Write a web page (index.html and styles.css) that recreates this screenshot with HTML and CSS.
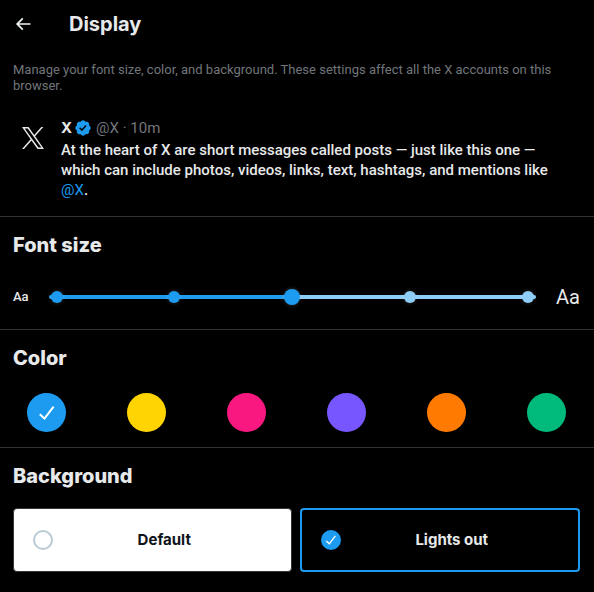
FILE: index.html
```html
<!DOCTYPE html>
<html lang="en">
<head>
<meta charset="utf-8">
<meta name="viewport" content="width=device-width, initial-scale=1">
<title>Display</title>
<link rel="stylesheet" href="styles.css">
</head>
<body>
<main class="settings">
  <header class="topbar">
    <button class="back" type="button" aria-label="Back">
      <svg class="back-icon" viewBox="0 0 24 24" aria-hidden="true"><path d="M7.414 13l5.043 5.04-1.414 1.42L3.586 12l7.457-7.46 1.414 1.42L7.414 11H21v2H7.414z"/></svg>
    </button>
    <h1 class="title">Display</h1>
  </header>

  <p class="intro">Manage your font size, color, and background. These settings affect all the X accounts on this browser.</p>

  <article class="post">
    <svg class="avatar" viewBox="0 0 24 24" aria-hidden="true"><path d="M14.1 10.3 22.3 1h-2l-7.1 8.1L7.6 1H1l8.6 12.2L1 23h2l7.5-8.6 6 8.6H23l-8.9-12.7zm-2.7 3-.9-1.2L3.7 2.5h3l5.6 7.8.9 1.2 7.2 10.1h-3l-6-8.3z"/></svg>
    <div class="post-body">
      <div class="byline">
        <span class="name">X</span>
        <svg class="badge" viewBox="0 0 22 22" role="img" aria-label="Verified account"><path d="M20.396 11c-.018-.646-.215-1.275-.57-1.816-.354-.54-.852-.972-1.438-1.246.223-.607.27-1.264.14-1.897-.131-.634-.437-1.218-.882-1.687-.47-.445-1.053-.75-1.687-.882-.633-.13-1.29-.083-1.897.14-.273-.587-.704-1.086-1.245-1.44S11.647 1.62 11 1.604c-.646.017-1.273.213-1.813.568s-.969.854-1.24 1.44c-.608-.223-1.267-.272-1.902-.14-.635.13-1.22.436-1.69.882-.445.47-.749 1.055-.878 1.688-.13.633-.08 1.29.144 1.896-.587.274-1.087.705-1.443 1.245-.356.54-.555 1.17-.574 1.817.02.647.218 1.276.574 1.817.356.54.856.972 1.443 1.245-.224.606-.274 1.263-.144 1.896.13.634.433 1.218.877 1.688.47.443 1.054.747 1.687.878.633.132 1.29.084 1.897-.136.274.586.705 1.084 1.246 1.439.54.354 1.17.551 1.816.569.647-.016 1.276-.213 1.817-.567s.972-.854 1.245-1.44c.604.239 1.266.296 1.903.164.636-.132 1.22-.447 1.68-.907.46-.46.776-1.044.908-1.681s.075-1.299-.165-1.903c.586-.274 1.084-.705 1.439-1.246.354-.54.551-1.17.569-1.816zM9.662 14.85l-3.429-3.428 1.293-1.302 2.072 2.072 4.4-4.794 1.347 1.246z"/></svg>
        <span class="meta">@X · 10m</span>
      </div>
      <p class="post-text">At the heart of X are short messages called posts — just like this one — which can include photos, videos, links, text, hashtags, and mentions like <a class="mention" href="#">@X</a>.</p>
    </div>
  </article>

  <section class="section font-section">
    <h2 class="heading"><label for="font-size">Font size</label></h2>
    <div class="slider-row">
      <span class="small-sample">Aa</span>
      <div class="slider">
        <div class="ticks" aria-hidden="true">
          <span class="tick"></span><span class="tick"></span><span class="tick"></span><span class="tick tick-off"></span><span class="tick tick-off"></span>
        </div>
        <input class="range" id="font-size" type="range" min="0" max="4" value="2">
      </div>
      <span class="large-sample">Aa</span>
    </div>
  </section>

  <section class="section color-section">
    <h2 class="heading">Color</h2>
    <div class="swatches">
      <label class="choice"><input class="swatch blue" type="radio" name="color" aria-label="Blue" checked><svg class="swatch-check" viewBox="0 0 24 24" aria-hidden="true"><path d="M9.64 18.952l-5.55-4.861 1.317-1.504 3.951 3.459 8.459-10.948L19.4 6.32 9.64 18.952z"/></svg></label>
      <label class="choice"><input class="swatch yellow" type="radio" name="color" aria-label="Yellow"></label>
      <label class="choice"><input class="swatch pink" type="radio" name="color" aria-label="Pink"></label>
      <label class="choice"><input class="swatch purple" type="radio" name="color" aria-label="Purple"></label>
      <label class="choice"><input class="swatch orange" type="radio" name="color" aria-label="Orange"></label>
      <label class="choice"><input class="swatch green" type="radio" name="color" aria-label="Green"></label>
    </div>
  </section>

  <section class="section">
    <h2 class="heading">Background</h2>
    <div class="cards">
      <label class="card card-light">
        <span class="choice"><input class="dot" type="radio" name="background"></span>
        <span class="card-text">Default</span>
      </label>
      <label class="card card-dark">
        <span class="choice"><input class="dot" type="radio" name="background" checked><svg class="dot-check" viewBox="0 0 24 24" aria-hidden="true"><path d="M9.64 18.952l-5.55-4.861 1.317-1.504 3.951 3.459 8.459-10.948L19.4 6.32 9.64 18.952z"/></svg></span>
        <span class="card-text">Lights out</span>
      </label>
    </div>
  </section>
</main>
</body>
</html>
```
FILE: styles.css
```css
* { box-sizing: border-box; }

body {
  margin: 0;
  background: #000;
  color: #e7e9ea;
  font-family: Roboto, sans-serif;
  font-size: 15px;
  line-height: 20px;
}

h1, h2, p { margin: 0; }
svg { display: block; fill: currentColor; }
input { margin: 0; }

.topbar {
  display: flex;
  align-items: center;
  gap: 36px;
  height: 48px;
  padding: 0 13px;
}
.back {
  padding: 0;
  border: 0;
  background: none;
  color: #eff3f4;
  cursor: pointer;
}
.back-icon { width: 20px; height: 20px; }
.title, .heading {
  font-family: Inter, sans-serif;
  font-size: 20px;
  line-height: 24px;
  font-weight: 800;
}
.title { font-weight: 700; }

.intro {
  padding: 14px 13px 0;
  color: #71767b;
  font-size: 13px;
  line-height: 16px;
}

.post {
  display: flex;
  gap: 16px;
  padding: 24px 24px 16px 21px;
}
.avatar { width: 24px; height: 24px; margin-top: 8px; flex: none; }
.byline { display: flex; align-items: center; gap: 2px; }
.name { font-family: Inter, sans-serif; font-weight: 700; }
.badge { width: 18px; height: 18px; color: #1d9bf0; }
.meta { margin-left: 2px; color: #71767b; }
.post-text { margin-top: 2px; font-weight: 500; }
.mention { color: #1d9bf0; font-weight: 400; text-decoration: none; }

.section { padding: 16px 14px 16px 13px; border-top: 1px solid #2f3336; }

.font-section { padding-bottom: 20px; }
.slider-row {
  display: flex;
  align-items: center;
  gap: 20px;
  margin-top: 28px;
  height: 24px;
}
.small-sample { font-size: 13px; font-weight: 500; }
.large-sample { font-size: 20px; }
.slider { display: grid; flex: 1; align-items: center; }
.ticks, .range { grid-area: 1 / 1; }
.ticks {
  display: flex;
  align-items: center;
  justify-content: space-between;
  height: 4px;
  padding: 0 2px;
  border-radius: 2px;
  background: linear-gradient(to right, #1d9bf0 50%, #8ecdf8 50%);
}
.tick {
  width: 12px;
  height: 12px;
  border-radius: 50%;
  background: #1d9bf0;
  box-shadow: 0 0 4px rgba(255, 255, 255, 0.2);
}
.tick-off { background: #8ecdf8; }
.range {
  appearance: none;
  z-index: 1;
  width: 100%;
  height: 16px;
  background: transparent;
}
.range::-webkit-slider-thumb {
  appearance: none;
  width: 16px;
  height: 16px;
  border-radius: 50%;
  background: #1d9bf0;
  box-shadow: 0 0 4px rgba(255, 255, 255, 0.2);
}

.color-section { padding-bottom: 15px; }
.swatches {
  display: flex;
  justify-content: space-between;
  margin-top: 23px;
  padding: 0 14px;
}
.choice { display: grid; place-items: center; }
.choice > * { grid-area: 1 / 1; }
.swatch, .dot { appearance: none; border-radius: 50%; }
.swatch { width: 39px; height: 39px; }
.blue { background: #1d9bf0; }
.yellow { background: #ffd400; }
.pink { background: #f91880; }
.purple { background: #7856ff; }
.orange { background: #ff7a00; }
.green { background: #00ba7c; }
.swatch-check, .dot-check { z-index: 1; color: #fff; pointer-events: none; }
.swatch-check { width: 24px; height: 24px; }

.cards { display: flex; gap: 8px; margin-top: 20px; }
.card {
  display: flex;
  flex: 1;
  align-items: center;
  gap: 4px;
  height: 64px;
  border-radius: 4px;
  font-family: Inter, sans-serif;
  font-weight: 700;
}
.card-light {
  padding: 0 19px;
  border: 1px solid #333639;
  background: #fff;
  color: #0f1419;
}
.card-dark { padding: 0 19px; border: 2px solid #1d9bf0; }
.card-text { flex: 1; text-align: center; }
.dot { width: 20px; height: 20px; border: 2px solid #b9cad3; }
.dot:checked { border-color: #1d9bf0; background: #1d9bf0; }
.dot-check { width: 16px; height: 16px; }
```
